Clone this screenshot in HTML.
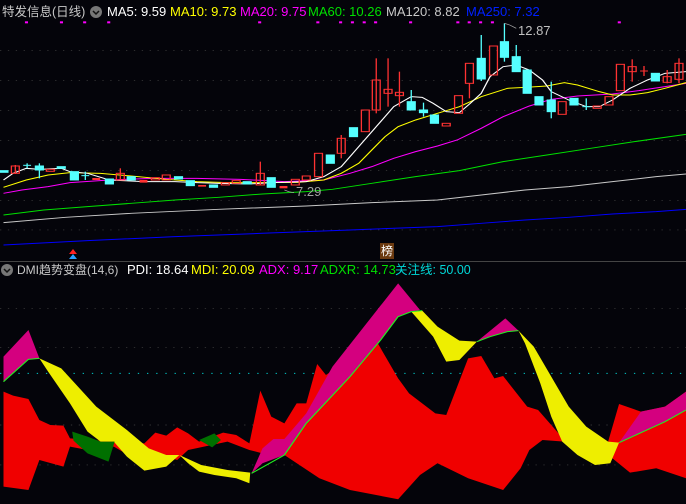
<!DOCTYPE html><html><head><meta charset="utf-8"><style>
body{margin:0;background:#04040a;width:686px;height:504px;overflow:hidden;position:relative;font-family:"Liberation Sans","Noto Sans CJK SC",sans-serif}
.t{position:absolute;font-size:13px;white-space:nowrap;line-height:14px}
</style></head><body>
<svg width="686" height="504" style="position:absolute;left:0;top:0">
<g transform="scale(0.4375,0.3333)">
<g stroke="#444" stroke-width="2" stroke-dasharray="3,15">
<line x1="0" y1="152" x2="1568" y2="152"/><line x1="0" y1="242" x2="1568" y2="242"/><line x1="0" y1="332" x2="1568" y2="332"/><line x1="0" y1="422" x2="1568" y2="422"/><line x1="0" y1="512" x2="1568" y2="512"/><line x1="0" y1="602" x2="1568" y2="602"/><line x1="0" y1="690" x2="1568" y2="690"/>
</g>
<g fill="#ff00ff">
<rect x="57" y="64" width="7" height="6"/><rect x="137" y="64" width="7" height="6"/><rect x="190" y="64" width="7" height="6"/><rect x="245" y="64" width="7" height="6"/><rect x="590" y="64" width="7" height="6"/><rect x="723" y="64" width="7" height="6"/><rect x="775" y="64" width="7" height="6"/><rect x="802" y="64" width="7" height="6"/><rect x="829" y="64" width="7" height="6"/><rect x="855" y="64" width="7" height="6"/><rect x="935" y="64" width="7" height="6"/><rect x="1043" y="64" width="7" height="6"/><rect x="1069" y="64" width="7" height="6"/><rect x="1095" y="64" width="7" height="6"/><rect x="1122" y="64" width="7" height="6"/><rect x="1412" y="64" width="7" height="6"/>
</g>
<g fill="none" stroke-width="3">
<polyline stroke="#0000ff" points="8,735 200,722 400,710 600,700 800,690 1000,680 1100,670 1200,660 1300,652 1400,642 1500,635 1568,628"/>
<polyline stroke="#c8c8c8" points="8,668 150,652 300,640 500,628 700,618 850,608 1000,600 1100,585 1200,570 1300,560 1400,545 1500,530 1568,522"/>
<polyline stroke="#00e000" points="8,645 100,630 200,620 300,610 400,600 500,592 600,582 700,575 760,568 850,550 950,530 1050,512 1150,485 1250,465 1350,445 1450,425 1568,403"/>
<polyline stroke="#ff00ff" points="8,580 50,570 110,560 160,548 250,540 350,535 450,535 550,538 650,545 740,540 800,520 850,500 900,475 950,455 1000,438 1045,420 1100,385 1150,350 1210,318 1260,298 1320,288 1400,282 1460,272 1520,260 1568,250"/>
<polyline stroke="#ffff00" points="8,562 60,540 110,525 160,518 230,520 300,528 380,538 450,545 520,548 600,548 680,547 740,540 780,520 820,490 850,450 880,410 910,380 950,360 1000,340 1050,320 1100,290 1160,265 1200,262 1250,258 1290,248 1320,255 1370,275 1400,285 1440,285 1480,278 1520,265 1568,248"/>
<polyline stroke="#ffffff" points="8,540 30,520 60,505 90,508 140,505 160,515 200,520 250,540 330,545 400,545 450,548 500,550 570,552 620,548 700,545 740,530 780,500 820,440 860,380 900,320 940,290 965,292 990,310 1020,335 1050,338 1075,310 1100,280 1120,230 1150,200 1180,195 1210,210 1240,240 1260,275 1300,300 1340,320 1370,320 1400,300 1440,265 1480,240 1520,220 1568,215"/>
</g>
<g stroke-width="3" stroke="#ff3232" fill="none">
<line x1="35" y1="495" x2="35" y2="522"/><rect x="26" y="498" width="18" height="22"/>
<rect x="106" y="508" width="18" height="6"/><line x1="275" y1="505" x2="275" y2="540"/><rect x="266" y="520" width="18" height="20"/>
<rect x="346" y="533" width="18" height="7"/><rect x="371" y="525" width="18" height="15"/><rect x="506" y="548" width="18" height="7"/><rect x="531" y="542" width="18" height="8"/>
<line x1="595" y1="485" x2="595" y2="555"/><rect x="586" y="520" width="18" height="35"/><rect x="666" y="538" width="18" height="17"/><rect x="691" y="528" width="18" height="12"/>
<rect x="719" y="460" width="18" height="70"/><line x1="780" y1="405" x2="780" y2="475"/><rect x="771" y="415" width="18" height="45"/><rect x="826" y="330" width="18" height="65"/>
<line x1="860" y1="175" x2="860" y2="340"/><rect x="851" y="240" width="18" height="90"/><line x1="887" y1="175" x2="887" y2="320"/><rect x="878" y="268" width="18" height="12"/>
<line x1="913" y1="215" x2="913" y2="320"/><rect x="904" y="277" width="18" height="10"/><rect x="1011" y="370" width="18" height="8"/><rect x="1039" y="287" width="18" height="53"/>
<line x1="1073" y1="250" x2="1073" y2="295"/><rect x="1064" y="190" width="18" height="60"/><rect x="1119" y="138" width="18" height="87"/><rect x="1276" y="305" width="18" height="38"/>
<rect x="1356" y="318" width="18" height="7"/><rect x="1383" y="290" width="18" height="25"/><rect x="1409" y="193" width="18" height="79"/>
<line x1="1445" y1="178" x2="1445" y2="245"/><rect x="1436" y="200" width="18" height="15"/><line x1="1472" y1="198" x2="1472" y2="228"/><line x1="1463" y1="213" x2="1481" y2="213"/>
<line x1="1525" y1="210" x2="1525" y2="250"/><rect x="1516" y="230" width="18" height="17"/><line x1="1552" y1="175" x2="1552" y2="250"/><rect x="1543" y="190" width="18" height="48"/>
</g>
<g fill="#ff3232"><rect x="211" y="534" width="18" height="6"/><rect x="319" y="540" width="18" height="8"/><rect x="453" y="555" width="18" height="5"/><rect x="639" y="558" width="18" height="7"/></g>
<g fill="#55ffff" stroke="#55ffff" stroke-width="3">
<rect x="0" y="512" width="18" height="5"/><line x1="62" y1="490" x2="62" y2="505"/><line x1="53" y1="496" x2="71" y2="496"/>
<line x1="90" y1="490" x2="90" y2="535"/><rect x="81" y="498" width="18" height="12"/><rect x="131" y="500" width="18" height="5"/><rect x="161" y="515" width="18" height="25"/>
<line x1="195" y1="515" x2="195" y2="540"/><line x1="186" y1="527" x2="204" y2="527"/><rect x="241" y="537" width="18" height="15"/><rect x="291" y="530" width="18" height="10"/>
<rect x="399" y="530" width="18" height="7"/><rect x="426" y="542" width="18" height="15"/><rect x="479" y="555" width="18" height="7"/><rect x="556" y="545" width="18" height="7"/>
<rect x="611" y="533" width="18" height="29"/><rect x="746" y="465" width="18" height="25"/><rect x="799" y="383" width="18" height="27"/>
<line x1="940" y1="270" x2="940" y2="330"/><rect x="931" y="305" width="18" height="25"/><line x1="968" y1="308" x2="968" y2="350"/><rect x="959" y="330" width="18" height="8"/>
<rect x="984" y="345" width="18" height="25"/><line x1="1100" y1="105" x2="1100" y2="243"/><rect x="1091" y="175" width="18" height="62"/>
<line x1="1153" y1="70" x2="1153" y2="185"/><rect x="1144" y="125" width="18" height="47"/><line x1="1180" y1="135" x2="1180" y2="215"/><rect x="1171" y="170" width="18" height="45"/>
<rect x="1196" y="210" width="18" height="70"/><rect x="1223" y="290" width="18" height="25"/><line x1="1260" y1="245" x2="1260" y2="355"/><rect x="1251" y="300" width="18" height="35"/>
<rect x="1303" y="295" width="18" height="20"/><line x1="1340" y1="295" x2="1340" y2="330"/><line x1="1331" y1="320" x2="1349" y2="320"/><rect x="1489" y="220" width="18" height="23"/>
</g>
<polyline points="1153,70 1165,75 1180,85" fill="none" stroke="#aaa" stroke-width="2"/>
<polyline points="650,570 660,575 672,578" fill="none" stroke="#aaa" stroke-width="2"/>
</g>
<line x1="0" y1="261.5" x2="686" y2="261.5" stroke="#444" stroke-width="1"/>
<rect x="380" y="243" width="14" height="16" fill="#6b3a10"/>
<polygon points="73,249 77,254 69,254" fill="#ff2020"/><polygon points="73,254 77,259 69,259" fill="#2aa0ff"/>
<g transform="translate(0,250) scale(0.4375,0.3333)">
<g stroke="#444" stroke-width="2" stroke-dasharray="3,15">
<line x1="0" y1="175" x2="1568" y2="175"/><line x1="0" y1="292" x2="1568" y2="292"/><line x1="0" y1="525" x2="1568" y2="525"/><line x1="0" y1="645" x2="1568" y2="645"/>
</g>
<line x1="0" y1="370" x2="1568" y2="370" stroke="#00c8c8" stroke-width="3" stroke-dasharray="3,18"/>
<polygon fill="#f00000" points="8,425 30,437 65,447 90,510 115,525 145,527 160,565 260,575 330,580 355,548 380,557 405,532 430,550 455,575 510,548 540,555 570,580 595,422 620,500 650,520 678,460 700,460 725,342 745,375 860,272 910,385 935,430 995,490 1020,495 1070,325 1100,318 1130,385 1150,378 1205,470 1230,480 1280,555 1300,575 1390,575 1415,462 1465,485 1520,470 1568,425 1568,685 1500,655 1440,668 1400,625 1360,600 1290,575 1240,570 1210,600 1190,655 1150,720 1070,685 1000,640 960,675 910,748 800,720 730,685 650,615 600,610 570,600 520,575 430,600 405,630 380,620 330,600 280,605 260,590 200,600 160,590 145,650 90,630 65,720 8,710"/>
<polygon fill="#d4007f" points="8,320 65,240 90,325 65,328 8,395"/>
<polygon fill="#eeee00" points="90,325 140,355 220,470 290,540 340,595 380,615 410,615 380,650 330,662 290,620 260,575 230,575 200,545 160,460 110,365"/>
<polygon fill="#007000" points="165,545 200,560 230,575 262,575 248,635 200,610 168,572"/>
<polygon fill="#eeee00" points="410,615 460,645 520,660 572,668 570,700 540,685 490,675 455,665 430,640"/>
<polygon fill="#007000" points="455,570 490,550 505,570 485,592"/>
<polygon fill="#d4007f" points="575,670 600,595 625,567 650,567 700,490 760,350 850,200 910,100 960,180 940,185 910,200 870,270 800,380 700,520 650,615 600,640"/>
<polygon fill="#eeee00" points="940,185 965,182 1000,230 1050,272 1090,275 1050,330 1020,335 990,260"/>
<polygon fill="#d4007f" points="1090,275 1155,205 1185,242 1160,245 1120,260"/>
<polygon fill="#eeee00" points="1185,242 1220,290 1260,380 1300,470 1340,530 1390,575 1415,578 1395,640 1360,645 1320,615 1285,575 1260,500 1235,400 1200,280"/>
<polygon fill="#d4007f" points="1415,578 1465,485 1520,470 1568,425 1568,480 1520,515 1470,545"/>
<polyline fill="none" stroke="#22ee22" stroke-width="3" points="8,395 65,328 90,325"/>
<polyline fill="none" stroke="#22ee22" stroke-width="3" points="575,670 650,615 700,520 800,380 870,270 910,200 940,185 965,182"/>
<polyline fill="none" stroke="#22ee22" stroke-width="3" points="1090,275 1120,260 1160,245 1185,242"/>
<polyline fill="none" stroke="#22ee22" stroke-width="3" points="1415,578 1470,545 1520,515 1568,480"/>
</g>
<circle cx="96" cy="12" r="6" fill="#777"/><circle cx="7" cy="270" r="6" fill="#777"/>
<polyline points="93,11 96,14 99,11" fill="none" stroke="#111" stroke-width="1.5"/>
<polyline points="4,269 7,272 10,269" fill="none" stroke="#111" stroke-width="1.5"/>
</svg>
<div class="t" style="left:2px;top:5px;color:#c8c8c8;font-size:12.5px">特发信息(日线)</div>
<div class="t" style="left:107px;top:5px;color:#fff">MA5: 9.59</div>
<div class="t" style="left:170px;top:5px;color:#ffff00">MA10: 9.73</div>
<div class="t" style="left:240px;top:5px;color:#ff00ff">MA20: 9.75</div>
<div class="t" style="left:308px;top:5px;color:#00e000">MA60: 10.26</div>
<div class="t" style="left:386px;top:5px;color:#c8c8c8">MA120: 8.82</div>
<div class="t" style="left:466px;top:5px;color:#0020ff">MA250: 7.32</div>
<div class="t" style="left:518px;top:24px;color:#c0c0c0">12.87</div>
<div class="t" style="left:296px;top:185px;color:#a0a0a0">7.29</div>
<div class="t" style="left:381px;top:244px;color:#fff;font-size:12px">榜</div>
<div class="t" style="left:17px;top:263px;color:#c8c8c8;font-size:12px">DMI趋势变盘(14,6)</div>
<div class="t" style="left:127px;top:263px;color:#fff">PDI: 18.64</div>
<div class="t" style="left:191px;top:263px;color:#ffff00">MDI: 20.09</div>
<div class="t" style="left:259px;top:263px;color:#ff00ff">ADX: 9.17</div>
<div class="t" style="left:320px;top:263px;color:#00e000">ADXR: 14.73</div>
<div class="t" style="left:395px;top:263px;color:#00d8d8;font-size:12.5px">关注线: 50.00</div>
</body></html>
